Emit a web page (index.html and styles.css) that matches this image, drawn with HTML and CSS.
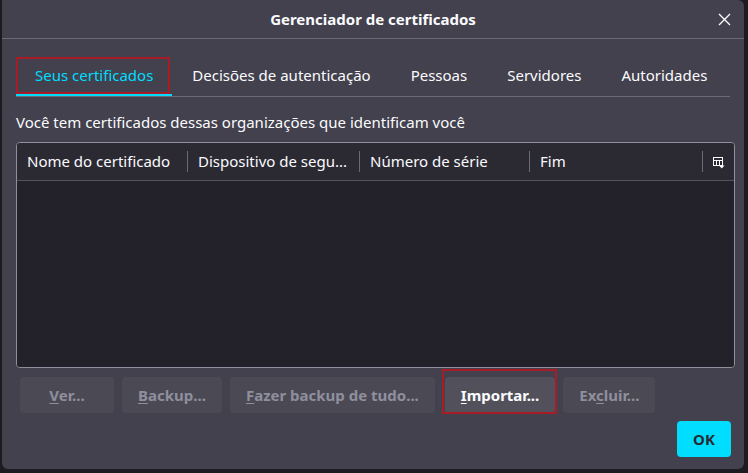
FILE: index.html
```html
<!DOCTYPE html>
<html lang="pt-BR">
<head>
<meta charset="utf-8">
<title>Gerenciador de certificados</title>
<link rel="stylesheet" href="styles.css">
</head>
<body>
<div class="dialog">
  <div class="titlebar">
    <span></span>
    <h1 class="title">Gerenciador de certificados</h1>
    <button class="close" aria-label="Fechar">
      <svg width="13" height="13" viewBox="0 0 13 13"><path d="M1 1 L12 12 M12 1 L1 12" stroke="#fbfbfe" stroke-width="1.4" fill="none"/></svg>
    </button>
  </div>
  <div class="content">
    <div class="tabs">
      <div class="tab selected">Seus certificados</div>
      <div class="tab">Decisões de autenticação</div>
      <div class="tab">Pessoas</div>
      <div class="tab">Servidores</div>
      <div class="tab">Autoridades</div>
    </div>
    <p class="desc">Você tem certificados dessas organizações que identificam você</p>
    <div class="tree">
      <div class="tree-head">
        <div class="col c1">Nome do certificado</div>
        <div class="col c2">Dispositivo de segu...</div>
        <div class="col c3">Número de série</div>
        <div class="col c4">Fim</div>
        <div class="picker">
          <svg width="12" height="12" viewBox="0 0 12 12">
            <rect x="0.5" y="0.5" width="9" height="8" fill="none" stroke="#fbfbfe" stroke-width="1"/>
            <path d="M0.5 3.5 H9.5 M3.5 3.5 V8.5 M6.5 3.5 V8.5" stroke="#fbfbfe" stroke-width="1" fill="none"/>
            <path d="M6 8.5 H11.5 L8.75 11.5 Z" fill="#fbfbfe"/>
          </svg>
        </div>
      </div>
      <div class="tree-body"></div>
    </div>
    <div class="buttons">
      <button class="btn disabled minw"><u>V</u>er...</button>
      <button class="btn disabled"><u>B</u>ackup...</button>
      <button class="btn disabled"><u>F</u>azer backup de tudo...</button>
      <button class="btn active"><u>I</u>mportar...</button>
      <button class="btn disabled">Ex<u>c</u>luir...</button>
    </div>
    <div class="footer">
      <button class="ok">OK</button>
    </div>
  </div>
</div>
</body>
</html>
```

FILE: styles.css
```css
html, body {
  margin: 0;
  padding: 0;
}
body {
  background: #1c1b22;
  width: 748px;
  height: 473px;
  overflow: hidden;
  font-family: "Noto Sans", "Open Sans", sans-serif;
  font-size: 15px;
  color: #fbfbfe;
}
.dialog {
  margin-left: 2px;
  width: 742px;
  height: 469px;
  background: #42414d;
  border-radius: 0 6px 6px 6px;
  display: flex;
  flex-direction: column;
}
.titlebar {
  height: 38px;
  border-bottom: 1px solid #6b6a74;
  display: grid;
  grid-template-columns: 1fr auto 1fr;
  align-items: center;
}
.title {
  margin: 0 0 1px 0;
  font-size: 15px;
  font-weight: bold;
  text-align: center;
}
.close {
  justify-self: end;
  margin-right: 13px;
  background: none;
  border: 0;
  padding: 0;
  width: 13px;
  height: 13px;
  display: flex;
}
.content {
  padding: 18px 9px 0 14px;
  display: flex;
  flex-direction: column;
}
.tabs {
  display: flex;
  height: 39px;
  border-bottom: 1px solid #6b6a74;
  margin-right: 5px;
}
.tab {
  padding: 0 20px 3px;
  display: flex;
  align-items: center;
  color: #fbfbfe;
  white-space: nowrap;
}
.tab.selected {
  position: relative;
  color: #00ddff;
  padding: 0 19px 1px;
  border-bottom: 2px solid #00ddff;
}
.tab.selected::after {
  content: "";
  position: absolute;
  left: 0;
  top: 0;
  right: 2px;
  bottom: 0;
  border: 2px solid #a81c28;
  pointer-events: none;
}
.desc {
  margin: 15px 0 0 0;
  line-height: 20px;
}
.tree {
  margin: 10px 0 0 0;
  height: 224px;
  border: 1px solid #8f8f9d;
  border-radius: 4px;
  display: flex;
  flex-direction: column;
  overflow: hidden;
}
.tree-head {
  height: 37px;
  background: #2b2a33;
  border-bottom: 1px solid #54535c;
  display: flex;
  align-items: center;
}
.col {
  height: 21px;
  line-height: 21px;
  padding-left: 10px;
  white-space: nowrap;
  border-right: 1px solid #6b6a74;
  box-sizing: border-box;
}
.c1 { width: 171px; }
.c2 { width: 172px; }
.c3 { width: 170px; }
.c4 { width: 173px; }
.picker {
  flex: 1;
  display: flex;
  justify-content: center;
  padding-top: 2px;
}
.tree-body {
  flex: 1;
  background: #23222b;
}
.buttons {
  display: flex;
  gap: 8px;
  margin: 9px 0 0 4px;
}
.btn {
  height: 36px;
  padding: 0 16px;
  border: 0;
  border-radius: 4px;
  font-family: inherit;
  font-size: 15px;
  font-weight: bold;
  white-space: nowrap;
}
.btn u {
  text-underline-offset: 2px;
}
.btn.minw { min-width: 94px; }
.btn.disabled {
  background: #4a4954;
  color: #8f8f9d;
}
.btn.active {
  position: relative;
  background: #52515b;
  color: #fbfbfe;
  margin-left: 2px;
}
.btn.active::after {
  content: "";
  position: absolute;
  left: -3px;
  right: -2px;
  top: -8px;
  bottom: -1px;
  border: 2px solid #a81c28;
  pointer-events: none;
}
.footer {
  display: flex;
  justify-content: flex-end;
  margin-top: 8px;
  padding-right: 4px;
}
.ok {
  width: 54px;
  height: 36px;
  border: 0;
  border-radius: 4px;
  background: #00ddff;
  color: #2b2a33;
  font-family: inherit;
  font-size: 15px;
  font-weight: bold;
}
```
